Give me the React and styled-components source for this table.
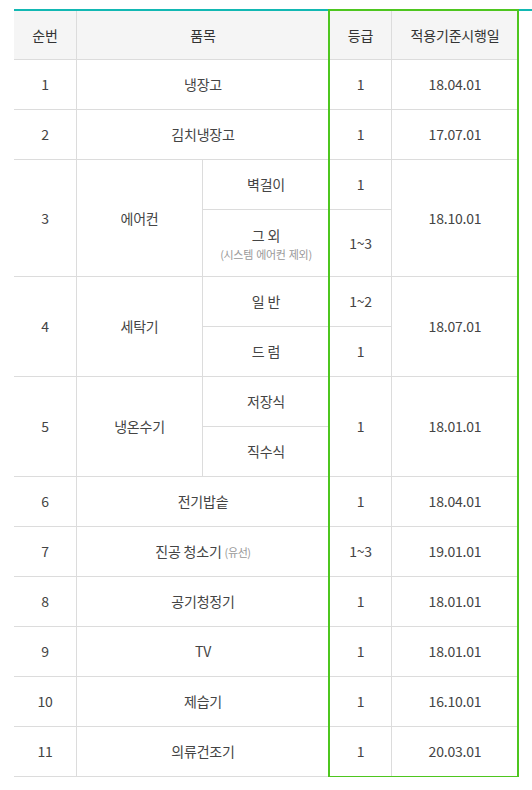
import React from "react";
import styled, { createGlobalStyle } from "styled-components";

const Global = createGlobalStyle`
  html, body { margin: 0; padding: 0; background: #fff; }
  body { font-family: "Noto Sans CJK KR", "Noto Sans", sans-serif; color: #444; }
`;

const Page = styled.div`
  padding: 9px 0 0 14px;
`;

const Wrapper = styled.div`
  position: relative;
  width: 518px;
  border-top: 2px solid #12b8b3;
`;

const Table = styled.table`
  width: 504px;
  table-layout: fixed;
  border-collapse: separate;
  border-spacing: 0;
  font-size: 14px;
  letter-spacing: -0.2px;
`;

const Col = styled.col`
  width: ${(p) => p.$w}px;
`;

const HeadCell = styled.th`
  box-sizing: border-box;
  height: 49px;
  padding: 0;
  background: #f5f5f5;
  font-weight: 400;
  color: #333;
  text-align: center;
  vertical-align: middle;
  border-bottom: 1px solid #dcdcdc;
  border-right: ${(p) => (p.$last ? "none" : "1px solid #dcdcdc")};
`;

const Cell = styled.td`
  box-sizing: border-box;
  height: ${(p) => p.$h || 50}px;
  padding: 0;
  text-align: center;
  vertical-align: middle;
  color: #444;
  line-height: 19px;
  border-bottom: 1px solid #dcdcdc;
  border-right: ${(p) => (p.$last ? "none" : "1px solid #dcdcdc")};
`;

const Note = styled.span`
  display: block;
  font-size: 11px;
  letter-spacing: -0.3px;
  word-spacing: 1px;
  line-height: 14px;
  color: #999;
  margin-top: 2px;
`;

const InlineNote = styled.span`
  font-size: 11px;
  letter-spacing: -0.4px;
  color: #999;
`;

const Highlight = styled.div`
  position: absolute;
  left: 314px;
  top: -2px;
  width: 191px;
  height: 769px;
  box-sizing: border-box;
  border: 2px solid #4ec61f;
  pointer-events: none;
`;

const singles = [
  { no: 1, name: "냉장고", grade: "1", date: "18.04.01" },
  { no: 2, name: "김치냉장고", grade: "1", date: "17.07.01" },
];

const singlesAfter = [
  { no: 6, name: "전기밥솥", grade: "1", date: "18.04.01" },
  { no: 7, name: "진공 청소기", note: "(유선)", grade: "1~3", date: "19.01.01" },
  { no: 8, name: "공기청정기", grade: "1", date: "18.01.01" },
  { no: 9, name: "TV", grade: "1", date: "18.01.01" },
  { no: 10, name: "제습기", grade: "1", date: "16.10.01" },
  { no: 11, name: "의류건조기", grade: "1", date: "20.03.01" },
];

function SingleRow({ r }) {
  return (
    <tr>
      <Cell>{r.no}</Cell>
      <Cell colSpan={2}>
        {r.name}
        {r.note && <> <InlineNote>{r.note}</InlineNote></>}
      </Cell>
      <Cell>{r.grade}</Cell>
      <Cell $last>{r.date}</Cell>
    </tr>
  );
}

export default function App() {
  return (
    <>
      <Global />
      <Page>
        <Wrapper>
          <Table>
            <colgroup>
              <Col $w={63} />
              <Col $w={126} />
              <Col $w={127} />
              <Col $w={62} />
              <Col $w={126} />
            </colgroup>
            <thead>
              <tr>
                <HeadCell>순번</HeadCell>
                <HeadCell colSpan={2}>품목</HeadCell>
                <HeadCell>등급</HeadCell>
                <HeadCell $last>적용기준시행일</HeadCell>
              </tr>
            </thead>
            <tbody>
              {singles.map((r) => (
                <SingleRow key={r.no} r={r} />
              ))}
              <tr>
                <Cell rowSpan={2}>3</Cell>
                <Cell rowSpan={2}>에어컨</Cell>
                <Cell>벽걸이</Cell>
                <Cell>1</Cell>
                <Cell rowSpan={2} $last>18.10.01</Cell>
              </tr>
              <tr>
                <Cell $h={67}>
                  그 외
                  <Note>(시스템 에어컨 제외)</Note>
                </Cell>
                <Cell $h={67}>1~3</Cell>
              </tr>
              <tr>
                <Cell rowSpan={2}>4</Cell>
                <Cell rowSpan={2}>세탁기</Cell>
                <Cell>일 반</Cell>
                <Cell>1~2</Cell>
                <Cell rowSpan={2} $last>18.07.01</Cell>
              </tr>
              <tr>
                <Cell>드 럼</Cell>
                <Cell>1</Cell>
              </tr>
              <tr>
                <Cell rowSpan={2}>5</Cell>
                <Cell rowSpan={2}>냉온수기</Cell>
                <Cell>저장식</Cell>
                <Cell rowSpan={2}>1</Cell>
                <Cell rowSpan={2} $last>18.01.01</Cell>
              </tr>
              <tr>
                <Cell>직수식</Cell>
              </tr>
              {singlesAfter.map((r) => (
                <SingleRow key={r.no} r={r} />
              ))}
            </tbody>
          </Table>
          <Highlight />
        </Wrapper>
      </Page>
    </>
  );
}
